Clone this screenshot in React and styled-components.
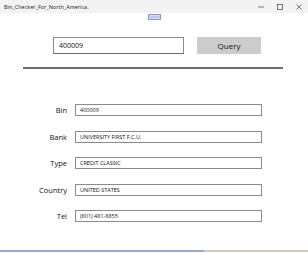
import React from "react";
import styled, { createGlobalStyle } from "styled-components";

const GlobalStyle = createGlobalStyle`
  html, body {
    margin: 0;
    padding: 0;
    background: #ffffff;
  }
  body {
    font-family: "Segoe UI", "Open Sans", "Noto Sans", sans-serif;
  }
`;

const rows = [
  { label: "Bin", value: "400009" },
  { label: "Bank", value: "UNIVERSITY FIRST F.C.U." },
  { label: "Type", value: "CREDIT CLASSIC" },
  { label: "Country", value: "UNITED STATES" },
  { label: "Tel", value: "(801) 481-8855" },
];

const App = () => {
  return (
    <>
      <GlobalStyle />
      <Window>
        <TitleBar>
          <Title>Bin_Checker_For_North_America.</Title>
          <Controls>
            <Control>
              <svg width="6" height="6" viewBox="0 0 6 6">
                <line x1="0" y1="3" x2="6" y2="3" stroke="#555" strokeWidth="0.8" />
              </svg>
            </Control>
            <Control>
              <svg width="6" height="6" viewBox="0 0 6 6">
                <rect x="0.5" y="0.5" width="5" height="5" fill="none" stroke="#555" strokeWidth="0.8" />
              </svg>
            </Control>
            <Control>
              <svg width="6" height="6" viewBox="0 0 6 6">
                <path d="M0.5 0.5 L5.5 5.5 M5.5 0.5 L0.5 5.5" stroke="#555" strokeWidth="0.8" />
              </svg>
            </Control>
          </Controls>
        </TitleBar>
        <Body>
          <DragHandle />
          <SearchRow>
            <SearchInput>400009</SearchInput>
            <QueryButton>Query</QueryButton>
          </SearchRow>
          <Divider />
          <Fields>
            {rows.map((row) => (
              <React.Fragment key={row.label}>
                <Label>{row.label}</Label>
                <ValueBox>{row.value}</ValueBox>
              </React.Fragment>
            ))}
          </Fields>
        </Body>
        <BottomEdge>
          <BlueEdge />
          <TanEdge />
        </BottomEdge>
      </Window>
    </>
  );
};

const Window = styled.div`
  width: 308px;
  height: 253px;
  display: flex;
  flex-direction: column;
  background: #ffffff;
  box-sizing: border-box;
  overflow: hidden;
`;

const TitleBar = styled.div`
  height: 13px;
  flex: none;
  display: flex;
  align-items: center;
  justify-content: space-between;
  background: #f3f3f3;
  padding-left: 4px;
`;

const Title = styled.span`
  font-size: 5.5px;
  color: #222;
`;

const Controls = styled.div`
  display: flex;
  height: 100%;
`;

const Control = styled.div`
  width: 19px;
  height: 100%;
  display: flex;
  align-items: center;
  justify-content: center;
`;

const Body = styled.div`
  flex: 1;
  display: flex;
  flex-direction: column;
`;

const DragHandle = styled.div`
  align-self: center;
  width: 11px;
  height: 4px;
  margin-top: 1px;
  margin-left: 1px;
  background: #aab4e0;
  border: 1px solid #8c98cc;
  box-shadow: inset 0 1.5px 0 #d6dcf5, inset 0 -1.5px 0 #d6dcf5;
`;

const SearchRow = styled.div`
  display: flex;
  align-items: center;
  gap: 13px;
  padding-left: 53px;
  margin-top: 17px;
`;

const SearchInput = styled.div`
  width: 131px;
  height: 17px;
  box-sizing: border-box;
  border: 1px solid #8a8a8a;
  border-bottom-color: #6a6a6a;
  display: flex;
  align-items: center;
  padding-left: 5px;
  font-size: 7px;
  color: #111;
`;

const QueryButton = styled.div`
  width: 64px;
  height: 17px;
  background: #cccccc;
  display: flex;
  align-items: center;
  justify-content: center;
  font-size: 8px;
  color: #111;
`;

const Divider = styled.div`
  margin: 13px 25px 0 23px;
  height: 2px;
  background: #707070;
`;

const Fields = styled.div`
  display: grid;
  grid-template-columns: 67px 187px;
  column-gap: 8px;
  row-gap: 14.5px;
  margin-top: 35px;
  align-items: center;
`;

const Label = styled.div`
  text-align: right;
  font-size: 7.5px;
  color: #111;
`;

const ValueBox = styled.div`
  height: 12px;
  box-sizing: border-box;
  border: 1px solid #8a8a8a;
  display: flex;
  align-items: center;
  padding-left: 4px;
  font-size: 5.5px;
  color: #111;
`;

const BottomEdge = styled.div`
  flex: none;
  height: 2px;
  display: flex;
  margin-bottom: 1px;
`;

const BlueEdge = styled.div`
  width: 204px;
  background: #9aaac6;
`;

const TanEdge = styled.div`
  flex: 1;
  background: #d4cab8;
`;

export default App;
